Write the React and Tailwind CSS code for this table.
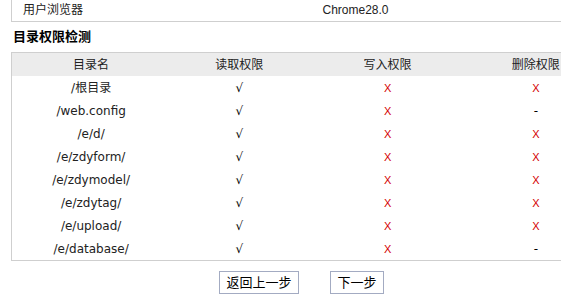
import React from 'react';

const rows = [
  { name: '/根目录', del: 'x' },
  { name: '/web.config', del: '-' },
  { name: '/e/d/', del: 'x' },
  { name: '/e/zdyform/', del: 'x' },
  { name: '/e/zdymodel/', del: 'x' },
  { name: '/e/zdytag/', del: 'x' },
  { name: '/e/upload/', del: 'x' },
  { name: '/e/database/', del: '-' },
];

const Mark = ({ v }) => {
  if (v === 'ok') return <span className="text-black">√</span>;
  if (v === '-') return <span className="text-black">-</span>;
  return <span className="text-[#d40000] text-[11px]" style={{ fontFamily: '"Liberation Sans", sans-serif' }}>X</span>;
};

const App = () => {
  return (
    <div
      className="w-[561px] h-[303px] overflow-hidden bg-white text-[12px] text-[#222]"
      style={{ fontFamily: '"Liberation Sans", "Noto Sans CJK SC", sans-serif' }}
    >
      {/* Browser info row (table continues above) */}
      <div className="ml-[11px] w-[600px] grid grid-cols-2 border-l border-b border-[#cfcfcf] h-[22px] leading-[21px]">
        <div className="pl-[11px]">用户浏览器</div>
        <div className="pl-[11px]">Chrome28.0</div>
      </div>

      {/* Heading */}
      <div className="h-[30px] pl-[13px] flex items-center font-bold text-[13px] text-black">
        目录权限检测
      </div>

      {/* Directory permission table */}
      <div
        className="ml-[11px] w-[600px] border border-[#cfcfcf]"
        style={{ fontFamily: '"DejaVu Sans", "Noto Sans CJK SC", sans-serif' }}
      >
        <div className="grid grid-cols-4 pl-[5px] h-[23px] items-center bg-[#ececec] text-center">
          <div>目录名</div>
          <div>读取权限</div>
          <div>写入权限</div>
          <div>删除权限</div>
        </div>
        {rows.map((r) => (
          <div key={r.name} className="grid grid-cols-4 pl-[5px] h-[23px] items-center text-center">
            <div>{r.name}</div>
            <div><Mark v="ok" /></div>
            <div><Mark v="x" /></div>
            <div><Mark v={r.del} /></div>
          </div>
        ))}
      </div>

      {/* Buttons */}
      <div className="flex pl-[219px] gap-[31px] mt-[10px]">
        <button className="w-[80px] h-[23px] border border-[#a3abc2] bg-white text-black text-[13px] leading-none">
          返回上一步
        </button>
        <button className="w-[54px] h-[23px] border border-[#a3abc2] bg-white text-black text-[13px] leading-none">
          下一步
        </button>
      </div>
    </div>
  );
};

export default App;
